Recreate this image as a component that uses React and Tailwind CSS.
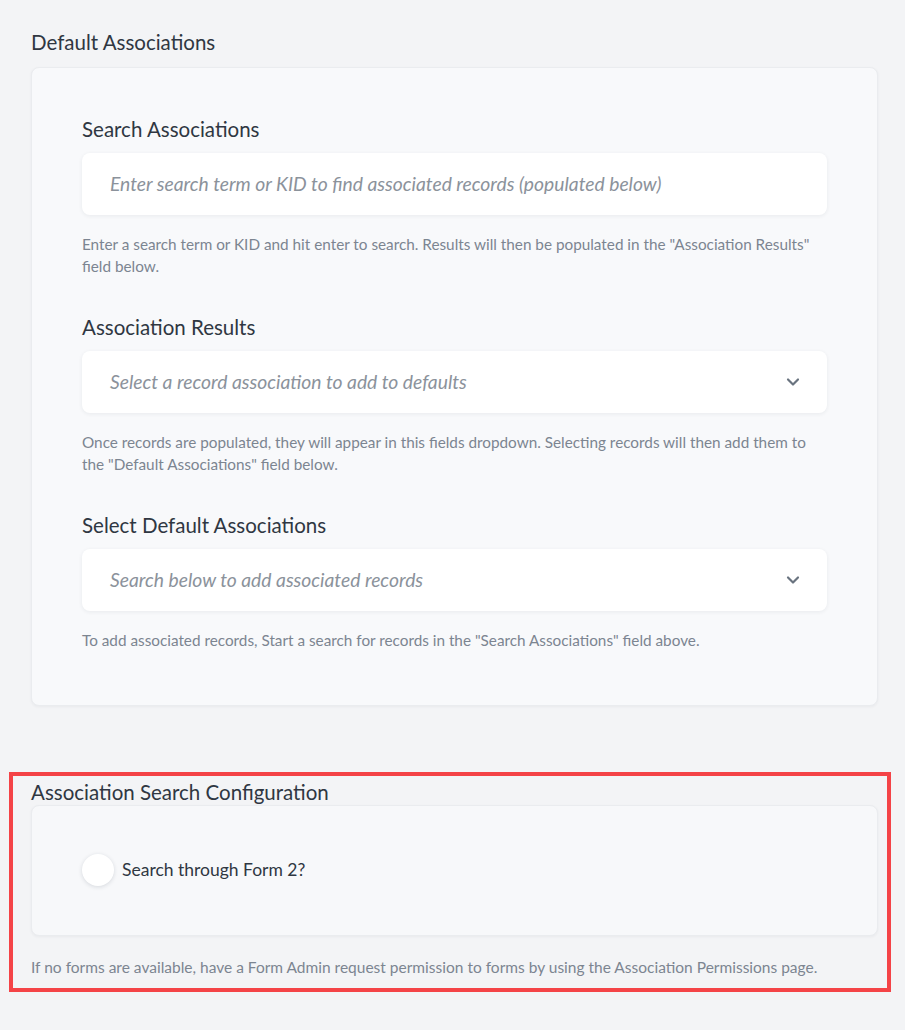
import { ChevronDown } from "lucide-react";

const font = { fontFamily: "Lato, 'Open Sans', sans-serif" };

const Field = ({ label, placeholder, help, select, first }) => (
  <div className={first ? "" : "mt-9"}>
    <h3 className="text-[20.5px] leading-7 text-[#2f3742]">{label}</h3>
    <div className="mt-[10px] flex h-[62px] items-center justify-between rounded-lg bg-white pl-[28px] pr-[24px] shadow-[0_1px_4px_rgba(30,40,60,0.07)]">
      <span className="text-[19.3px] italic text-[#8b929b]">{placeholder}</span>
      {select && (
        <ChevronDown className="h-5 w-5 text-[#69737f]" strokeWidth={2.6} />
      )}
    </div>
    <p className="mt-[18px] text-[15.3px] leading-[22px] text-[#7c8591]">{help}</p>
  </div>
);

export default function App() {
  return (
    <div
      className="min-h-[1030px] bg-[#f3f4f6] pl-[31px] pr-[27px] pt-[28px] pb-[38px]"
      style={font}
    >
      <h2 className="text-[20.5px] leading-7 text-[#2f3742]">Default Associations</h2>
      <div className="mt-[11px] rounded-lg border border-[#eaecef] bg-[#f8f9fb] px-[50px] pt-[47px] pb-[54px] shadow-[0_1px_3px_rgba(30,40,60,0.05)]">
        <Field
          first
          label="Search Associations"
          placeholder="Enter search term or KID to find associated records (populated below)"
          help={
            'Enter a search term or KID and hit enter to search. Results will then be populated in the "Association Results" field below.'
          }
        />
        <Field
          select
          label="Association Results"
          placeholder="Select a record association to add to defaults"
          help={
            'Once records are populated, they will appear in this fields dropdown. Selecting records will then add them to the "Default Associations" field below.'
          }
        />
        <Field
          select
          label="Select Default Associations"
          placeholder="Search below to add associated records"
          help={
            'To add associated records, Start a search for records in the "Search Associations" field above.'
          }
        />
      </div>

      <div className="mt-[66px] -ml-[22px] -mr-[13px] border-4 border-[#f44347] pl-[18px] pr-[9px] pt-[3px] pb-[10px]">
        <h2 className="text-[20.5px] leading-[26px] text-[#2f3742]">
          Association Search Configuration
        </h2>
        <div className="rounded-lg border border-[#eaecef] bg-[#f7f8fa] px-[50px] pt-[48px] pb-[49px] shadow-[0_1px_3px_rgba(30,40,60,0.05)]">
          <div className="flex items-center gap-2">
            <span className="h-8 w-8 rounded-full bg-white shadow-[0_1px_4px_rgba(30,40,60,0.15)]" />
            <span className="text-[17.5px] text-[#2f3742]">Search through Form 2?</span>
          </div>
        </div>
        <p className="mt-[20px] text-[15.5px] leading-[22px] text-[#7c8591]">
          If no forms are available, have a Form Admin request permission to forms by using the Association Permissions page.
        </p>
      </div>
    </div>
  );
}
